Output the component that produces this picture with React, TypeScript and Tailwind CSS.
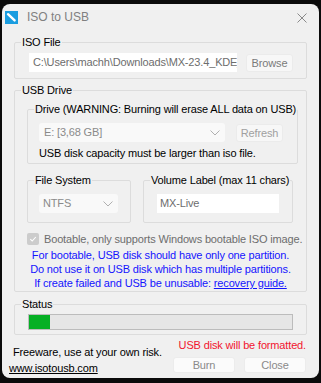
import React from 'react';

const Legend: React.FC<{ children: React.ReactNode }> = ({ children }) => (
  <legend className="ml-[6px] px-[1px] text-[11px] leading-[14px] text-black whitespace-nowrap">{children}</legend>
);

const Chevron: React.FC = () => (
  <svg width="10" height="6" viewBox="0 0 10 6" className="shrink-0">
    <path d="M0.5 0.5 L5 5 L9.5 0.5" fill="none" stroke="#b0b0b0" strokeWidth="1" />
  </svg>
);

const App: React.FC = () => {
  return (
    <div className="w-[321px] h-[383px] bg-[#0b0b0b] pt-[4px] pl-[2px] font-['Liberation_Sans',Arial,sans-serif] tracking-[-0.15px] whitespace-nowrap overflow-hidden">
      <div className="w-[317px] h-[374px] rounded-[8px] bg-[#f0f0f0] flex flex-col">
        {/* Title bar */}
        <div className="h-[26px] flex items-center pl-[3px] pr-[12px]">
          <svg width="13" height="13" viewBox="0 0 13 13" className="shrink-0">
            <rect width="13" height="13" fill="#1a9de0" />
            <path d="M3 3.2 L9.6 9.4" stroke="#ffffff" strokeWidth="2.4" strokeLinecap="round" />
          </svg>
          <span className="ml-[9px] text-[12px] leading-[16px] tracking-normal text-[#808080]">ISO to USB</span>
          <svg width="10" height="10" viewBox="0 0 10 10" className="ml-auto mt-[2px]">
            <path d="M0.5 0.5 L9.5 9.5 M9.5 0.5 L0.5 9.5" stroke="#8a8a8a" strokeWidth="1" />
          </svg>
        </div>

        {/* ISO File */}
        <fieldset className="mt-[5px] ml-[12px] w-[293px] border border-[#dcdcdc] rounded-[2px]">
          <Legend>ISO File</Legend>
          <div className="flex items-center gap-[9px] pl-[14px] pt-[4px] pb-[6px]">
            <div className="w-[208px] h-[19px] shrink-0 bg-white px-[4px] text-[11px] leading-[19px] text-[#6d6d6d] overflow-hidden">
              C:\Users\machh\Downloads\MX-23.4_KDE_x64.iso
            </div>
            <div className="w-[47px] h-[18px] shrink-0 rounded-[3px] bg-[#f7f7f7] border border-[#ebebeb] text-[11px] leading-[16px] text-[#7a7a7a] text-center">
              Browse
            </div>
          </div>
        </fieldset>

        {/* USB Drive */}
        <fieldset className="mt-[4px] ml-[12px] w-[293px] border border-[#dcdcdc] rounded-[2px] pb-[1px]">
          <Legend>USB Drive</Legend>

          <fieldset className="mt-[5px] ml-[12px] w-[266px] border border-[#dcdcdc] rounded-[2px]">
            <Legend>Drive (WARNING: Burning will erase ALL data on USB)</Legend>
            <div className="pl-[11px] pt-[7px] pb-[3px]">
              <div className="flex items-center gap-[11px]">
                <div className="w-[186px] h-[19px] rounded-[3px] bg-[#f9f9f9] flex items-center justify-between pl-[5px] pr-[5px]">
                  <span className="text-[11px] leading-[19px] text-[#8a8a8a]">E: [3,68 GB]</span>
                  <Chevron />
                </div>
                <div className="w-[47px] h-[18px] rounded-[3px] bg-[#f7f7f7] border border-[#ebebeb] text-[11px] leading-[16px] text-[#a0a0a0] text-center">
                  Refresh
                </div>
              </div>
              <div className="mt-[4px] text-[11px] leading-[14px] text-black">
                USB disk capacity must be larger than iso file.
              </div>
            </div>
          </fieldset>

          <div className="mt-[9px] ml-[12px] flex gap-[12px]">
            <fieldset className="w-[104px] border border-[#dcdcdc] rounded-[2px]">
              <Legend>File System</Legend>
              <div className="pl-[11px] pt-[7px] pb-[9px]">
                <div className="w-[79px] h-[19px] rounded-[3px] bg-[#f9f9f9] flex items-center justify-between pl-[4px] pr-[5px]">
                  <span className="text-[11px] leading-[19px] text-[#8a8a8a]">NTFS</span>
                  <Chevron />
                </div>
              </div>
            </fieldset>
            <fieldset className="w-[150px] border border-[#dcdcdc] rounded-[2px]">
              <Legend>Volume Label (max 11 chars)</Legend>
              <div className="pl-[13px] pt-[7px] pb-[9px]">
                <div className="w-[122px] h-[19px] bg-white px-[3px] text-[11px] leading-[19px] text-[#6d6d6d]">
                  MX-Live
                </div>
              </div>
            </fieldset>
          </div>

          <div className="mt-[9px] ml-[12px] flex items-center gap-[5px]">
            <div className="w-[12px] h-[12px] rounded-[2px] bg-[#cccccc] flex items-center justify-center">
              <svg width="8" height="8" viewBox="0 0 8 8">
                <path d="M1.3 4.2 L3.2 6 L6.8 2" fill="none" stroke="#ffffff" strokeWidth="1.1" />
              </svg>
            </div>
            <span className="text-[11px] leading-[14px] text-[#6d6d6d]">
              Bootable, only supports Windows bootable ISO image.
            </span>
          </div>

          <div className="mt-[2px] text-center text-[11px] leading-[14px] text-[#1414ff]">
            <div>For bootable, USB disk should have only one partition.</div>
            <div>Do not use it on USB disk which has multiple partitions.</div>
            <div>
              If create failed and USB be unusable: <span className="underline">recovery guide.</span>
            </div>
          </div>
        </fieldset>

        {/* Status */}
        <fieldset className="mt-[5px] ml-[12px] w-[293px] border border-[#dcdcdc] rounded-[2px]">
          <Legend>Status</Legend>
          <div className="pl-[13px] pt-[3px] pb-[4px]">
            <div className="w-[265px] h-[16px] border border-[#bcbcbc] bg-[#e6e6e6] flex">
              <div className="w-[21px] h-full bg-[#06b025]" />
            </div>
          </div>
        </fieldset>

        {/* Footer */}
        <div className="flex justify-between pr-[13px]">
          <div className="flex flex-col pt-[10px]">
            <span className="pl-[11px] text-[11px] leading-[14px] text-black">Freeware, use at your own risk.</span>
            <span className="mt-[2px] pl-[7px] text-[11px] leading-[14px] text-black underline">www.isotousb.com</span>
          </div>
          <div className="flex flex-col items-end pt-[3px]">
            <span className="text-[11px] leading-[14px] text-[#f2142f]">USB disk will be formatted.</span>
            <div className="mt-[5px] flex gap-[9px]">
              <div className="w-[62px] h-[16px] rounded-[3px] bg-[#fbfbfb] border border-[#ececec] text-[11px] leading-[14px] text-[#8a8a8a] text-center">
                Burn
              </div>
              <div className="w-[62px] h-[16px] rounded-[3px] bg-[#fbfbfb] border border-[#ececec] text-[11px] leading-[14px] text-[#8a8a8a] text-center">
                Close
              </div>
            </div>
          </div>
        </div>
      </div>
    </div>
  );
};

export default App;
